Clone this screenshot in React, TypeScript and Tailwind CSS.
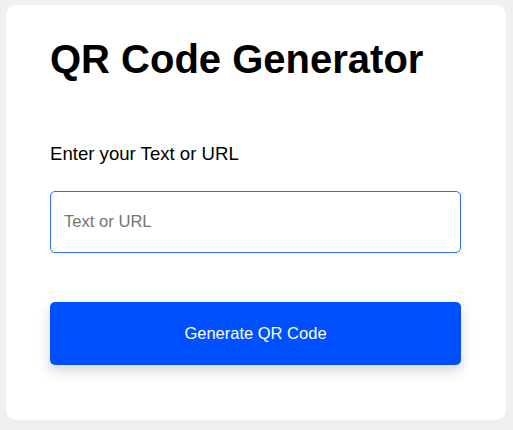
import React, { useState } from "react";

const App: React.FC = () => {
  const [text, setText] = useState("");

  return (
    <div className="min-h-[430px] w-full bg-[#f0f0f0] pt-[5px] pl-[6px] font-['Liberation_Sans',Arial,sans-serif]">
      <div className="w-[500px] h-[415px] bg-white rounded-[10px] px-[44px] pt-[34px]">
        {/* Title */}
        <h1 className="text-[40px] leading-none font-bold text-black">
          QR Code Generator
        </h1>

        {/* Label */}
        <label className="block mt-[66px] text-[18.6px] leading-none text-black">
          Enter your Text or URL
        </label>

        {/* Input */}
        <input
          type="text"
          value={text}
          onChange={(e) => setText(e.target.value)}
          placeholder="Text or URL"
          className="block mt-[27px] w-[411px] h-[62px] px-[13px] text-[16.6px] text-black placeholder:text-[#757575] border border-[#2a6aff] rounded-[5px] outline-none"
        />

        {/* Button */}
        <button className="block mt-[49px] w-[411px] h-[63px] bg-[#0050ff] text-white text-[16.5px] rounded-[5px] shadow-[0_6px_14px_rgba(0,0,0,0.16)]">
          Generate QR Code
        </button>
      </div>
    </div>
  );
};

export default App;
